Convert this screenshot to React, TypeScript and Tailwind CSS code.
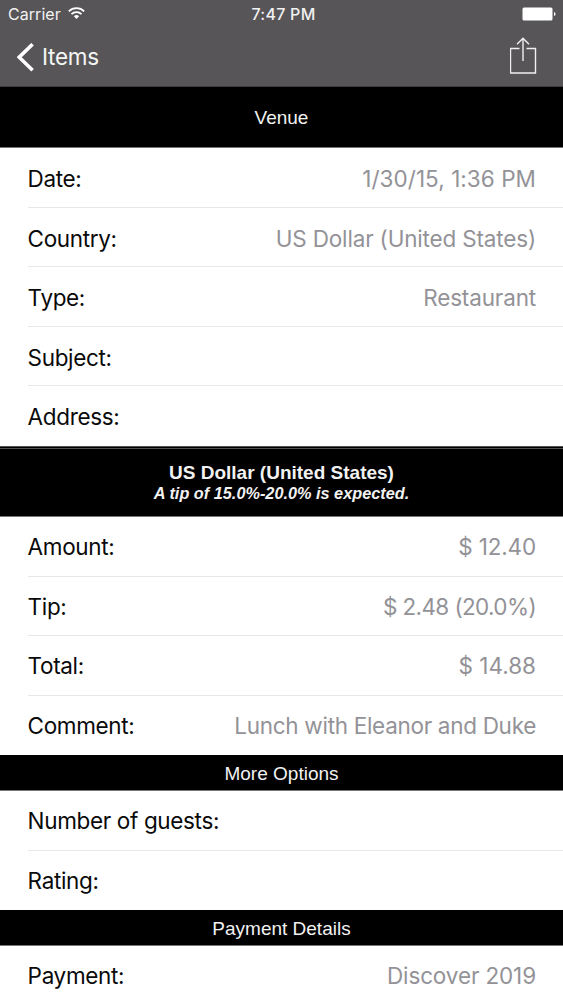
import type { ReactNode } from 'react'

interface Field {
  label: string
  value?: string
  tracking?: string
}

const VENUE: Field[] = [
  { label: 'Date:', value: '1/30/15, 1:36 PM', tracking: 'tracking-[0.05px]' },
  { label: 'Country:', value: 'US Dollar (United States)', tracking: 'tracking-[-0.17px]' },
  { label: 'Type:', value: 'Restaurant', tracking: 'tracking-[-0.15px]' },
  { label: 'Subject:' },
  { label: 'Address:' },
]

const AMOUNTS: Field[] = [
  { label: 'Amount:', value: '$ 12.40', tracking: 'tracking-[-0.15px]' },
  { label: 'Tip:', value: '$ 2.48 (20.0%)', tracking: 'tracking-[-0.62px]' },
  { label: 'Total:', value: '$ 14.88', tracking: 'tracking-[0px]' },
  { label: 'Comment:', value: 'Lunch with Eleanor and Duke', tracking: 'tracking-[-0.3px]' },
]

const OPTIONS: Field[] = [{ label: 'Number of guests:' }, { label: 'Rating:' }]

const PAYMENT: Field[] = [
  { label: 'Payment:', value: 'Discover 2019', tracking: 'tracking-[-0.12px]' },
]

function StatusBar() {
  return (
    <div className="grid h-7 grid-cols-3 items-center pl-2 pr-[7px] text-[16px] text-[#f2f2f2]">
      <div className="flex items-center gap-[7px]">
        <span className="tracking-[0.05px]">Carrier</span>
        <svg className="-mt-0.5" width="17" height="12" viewBox="0 0 17 12" fill="none" stroke="#fff" strokeWidth="1.8">
          <path d="M0.8 4.3a10.8 10.8 0 0 1 15.4 0" />
          <path d="M3.5 7.2a7 7 0 0 1 10 0" />
          <path d="M5.9 9.3a3.8 3.8 0 0 1 5.2 0L8.5 12z" fill="#fff" stroke="none" />
        </svg>
      </div>
      <span className="pl-[3px] text-center font-medium tracking-[0.25px]">7:47 PM</span>
      <svg className="-mt-px justify-self-end" width="34" height="14" viewBox="0 0 34 14" fill="#fff">
        <rect x="0.5" y="0.5" width="30" height="13" rx="1.5" />
        <path d="M32 5q1.6 0.4 1.6 2t-1.6 2z" />
      </svg>
    </div>
  )
}

function NavBar() {
  return (
    <div className="flex h-[58px] items-center justify-between pl-[17px] pr-[26px]">
      <button className="flex items-center gap-[8px] text-[22.5px] text-[#f5f5f5]">
        <svg width="17" height="29" viewBox="0 0 17 29" fill="none" stroke="#fff" strokeWidth="3.6">
          <path d="M15.6 1.2 2.2 14.2l13.4 13" />
        </svg>
        <span className="tracking-[-0.3px]">Items</span>
      </button>
      <button aria-label="Share" className="-mt-1">
        <svg width="27" height="37" viewBox="0 0 27 37" fill="none" stroke="#f0f0f0" strokeWidth="1.4">
          <path d="M9.5 11.5h-9V36h25V11.5h-9" />
          <path d="M13 24V1.5M7 7.2l6-6 6 6" />
        </svg>
      </button>
    </div>
  )
}

function FieldList({ fields, className, rowClass = 'pt-0.5' }: { fields: Field[]; className: string; rowClass?: string }) {
  return (
    <div className={`flex shrink-0 flex-col bg-white pl-7 ${className}`}>
      {fields.map((f) => (
        <div
          key={f.label}
          className={`flex flex-1 items-center justify-between border-b border-[#e8e8ea] pr-[27px] text-[22.5px] last:border-transparent ${rowClass}`}
        >
          <span className="-ml-[0.4px] tracking-[-0.35px] text-[#0a0a0a]">{f.label}</span>
          <span className={`text-[#939297] ${f.tracking ?? ''}`}>{f.value}</span>
        </div>
      ))}
    </div>
  )
}

function Band({ children, className }: { children: ReactNode; className: string }) {
  return (
    <div
      className={`flex shrink-0 flex-col items-center justify-center border-b border-[#77767a] bg-black font-['Liberation_Sans',Arial,sans-serif] text-[19px] text-[#f2f2f2] ${className}`}
    >
      {children}
    </div>
  )
}

export default function App() {
  return (
    <div className="flex h-[1000px] w-[563px] flex-col overflow-hidden whitespace-nowrap bg-white font-['Inter',sans-serif] leading-none">
      <header className="h-[87px] shrink-0 border-b border-[#3c3b3d] bg-[#575558]">
        <StatusBar />
        <NavBar />
      </header>
      <Band className="h-[61px]">Venue</Band>
      <FieldList fields={VENUE} className="h-[298px]" rowClass="pt-1" />
      <div className="h-[3px] shrink-0 border-y border-[#515053] bg-black" />
      <Band className="h-[68px] gap-[3px] font-bold">
        <span>US Dollar (United States)</span>
        <span className="text-[16.3px] italic">A tip of 15.0%-20.0% is expected.</span>
      </Band>
      <FieldList fields={AMOUNTS} className="h-[238px]" />
      <Band className="h-9 pt-0.5">More Options</Band>
      <FieldList fields={OPTIONS} className="h-[119px]" />
      <Band className="h-9 pt-0.5">Payment Details</Band>
      <FieldList fields={PAYMENT} className="h-[60px]" />
    </div>
  )
}
